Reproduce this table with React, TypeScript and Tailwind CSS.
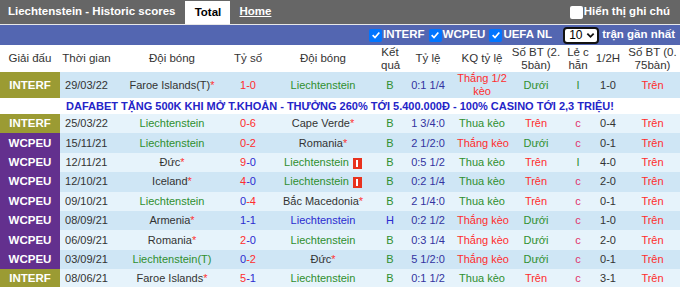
import React from "react"

type Row = {
  league: "INTERF" | "WCPEU"
  date: string
  home: string
  homeStar?: boolean
  homeGreen?: boolean
  score: [string, string]
  scoreColors: [string, string]
  away: string
  awayStar?: boolean
  awayColor?: string
  redCard?: boolean
  result: "B" | "H"
  odds: string
  oddsResult: string
  ou: "Dưới" | "Trên"
  oe: "I" | "c"
  half: string
  ou2: string
}

const RED = "text-[#ff2d2d]"
const BLUE = "text-[#2b2bd0]"
const GREEN = "text-[#2f8f2f]"

const rows: Row[] = [
  { league: "INTERF", date: "29/03/22", home: "Faroe Islands(T)", homeStar: true, score: ["1", "0"], scoreColors: [RED, RED], away: "Liechtenstein", awayColor: GREEN, result: "B", odds: "0:1 1/4", oddsResult: "Thắng 1/2 kèo", ou: "Dưới", oe: "I", half: "1-0", ou2: "Trên" },
  { league: "INTERF", date: "25/03/22", home: "Liechtenstein", homeGreen: true, score: ["0", "6"], scoreColors: [RED, RED], away: "Cape Verde", awayStar: true, result: "B", odds: "1 3/4:0", oddsResult: "Thua kèo", ou: "Trên", oe: "c", half: "0-4", ou2: "Trên" },
  { league: "WCPEU", date: "15/11/21", home: "Liechtenstein", homeGreen: true, score: ["0", "2"], scoreColors: [RED, RED], away: "Romania", awayStar: true, result: "B", odds: "2 1/2:0", oddsResult: "Thắng kèo", ou: "Dưới", oe: "c", half: "0-1", ou2: "Trên" },
  { league: "WCPEU", date: "12/11/21", home: "Đức", homeStar: true, score: ["9", "0"], scoreColors: [RED, BLUE], away: "Liechtenstein", awayColor: GREEN, redCard: true, result: "B", odds: "0:5 1/2", oddsResult: "Thua kèo", ou: "Trên", oe: "I", half: "4-0", ou2: "Trên" },
  { league: "WCPEU", date: "12/10/21", home: "Iceland", homeStar: true, score: ["4", "0"], scoreColors: [RED, BLUE], away: "Liechtenstein", awayColor: GREEN, redCard: true, result: "B", odds: "0:2 1/4", oddsResult: "Thua kèo", ou: "Trên", oe: "c", half: "2-0", ou2: "Trên" },
  { league: "WCPEU", date: "09/10/21", home: "Liechtenstein", homeGreen: true, score: ["0", "4"], scoreColors: [BLUE, RED], away: "Bắc Macedonia", awayStar: true, result: "B", odds: "2 1/4:0", oddsResult: "Thua kèo", ou: "Trên", oe: "c", half: "0-1", ou2: "Trên" },
  { league: "WCPEU", date: "08/09/21", home: "Armenia", homeStar: true, score: ["1", "1"], scoreColors: [BLUE, BLUE], away: "Liechtenstein", awayColor: BLUE, result: "H", odds: "0:2 1/2", oddsResult: "Thắng kèo", ou: "Dưới", oe: "c", half: "1-0", ou2: "Trên" },
  { league: "WCPEU", date: "06/09/21", home: "Romania", homeStar: true, score: ["2", "0"], scoreColors: [RED, BLUE], away: "Liechtenstein", awayColor: GREEN, result: "B", odds: "0:3 1/4", oddsResult: "Thắng kèo", ou: "Dưới", oe: "c", half: "2-0", ou2: "Trên" },
  { league: "WCPEU", date: "03/09/21", home: "Liechtenstein(T)", homeGreen: true, score: ["0", "2"], scoreColors: [BLUE, RED], away: "Đức", awayStar: true, result: "B", odds: "5 1/2:0", oddsResult: "Thắng kèo", ou: "Dưới", oe: "c", half: "0-1", ou2: "Trên" },
  { league: "INTERF", date: "08/06/21", home: "Faroe Islands", homeStar: true, score: ["5", "1"], scoreColors: [RED, BLUE], away: "Liechtenstein", awayColor: GREEN, result: "B", odds: "0:1 1/2", oddsResult: "Thua kèo", ou: "Trên", oe: "c", half: "3-1", ou2: "Trên" },
]

function Star() {
  return <span className="text-[#ff3333]">*</span>
}

function RedCard() {
  return (
    <span className="ml-1 inline-flex h-[11px] w-[9px] items-center justify-center bg-[#e8321e] align-[-1px]">
      <span className="h-[7px] w-[2px] bg-white" />
    </span>
  )
}

function Check({ checked }: { checked: boolean }) {
  return checked ? (
    <span className="inline-flex h-[13px] w-[13px] shrink-0 items-center justify-center rounded-[2px] bg-[#0075ff]">
      <svg viewBox="0 0 12 12" className="h-[10px] w-[10px]">
        <path d="M2 6.2 L4.8 9 L10 3" fill="none" stroke="white" strokeWidth="2" />
      </svg>
    </span>
  ) : (
    <span className="inline-block h-[13px] w-[13px] shrink-0 rounded-[2px] bg-white" />
  )
}

export default function App() {
  return (
    <div className="w-[680px] h-[287px] overflow-hidden bg-white font-['Liberation_Sans',Arial,sans-serif] text-[11px]">
      <div className="flex h-[25px] items-end bg-[#666666] border-b border-[#e8e8e8]">
        <div className="flex h-full items-center pl-2 text-[11.5px] font-bold text-white">Liechtenstein - Historic scores</div>
        <div className="ml-[10px] flex h-[23px] w-[45px] items-center justify-center bg-white text-[11.5px] font-bold text-black">Total</div>
        <div className="ml-[9px] flex h-full items-center text-[11.5px] font-bold text-white underline">Home</div>
        <div className="ml-auto mr-[10px] flex h-full items-center gap-[1px] text-[11.5px] font-bold text-white">
          <Check checked={false} />
          <span>Hiển thị ghi chú</span>
        </div>
      </div>
      <div className="flex h-[20px] items-center justify-end gap-[1px] bg-[#5366b1] pr-[5px] text-[11.5px] font-bold text-white">
        <Check checked />
        <span className="mr-[3px]">INTERF</span>
        <Check checked />
        <span className="mr-[3px]">WCPEU</span>
        <Check checked />
        <span>UEFA NL</span>
        <div className="ml-[10px] flex h-[17px] w-[36px] items-center justify-between rounded-[4px] border-2 border-[#111] bg-white pl-[4px] pr-[2px] text-[12px] font-normal text-black">
          <span>10</span>
          <svg viewBox="0 0 10 10" className="h-[9px] w-[9px]">
            <path d="M1.5 3 L5 6.5 L8.5 3" fill="none" stroke="#111" strokeWidth="2" />
          </svg>
        </div>
        <span className="ml-[2px]">trận gần nhất</span>
      </div>
      <table className="w-[680px] table-fixed border-collapse text-center leading-[13px]">
        <colgroup>
          <col className="w-[60px]" />
          <col className="w-[53px]" />
          <col className="w-[118px]" />
          <col className="w-[34px]" />
          <col className="w-[116px]" />
          <col className="w-[18px]" />
          <col className="w-[58px]" />
          <col className="w-[50px]" />
          <col className="w-[58px]" />
          <col className="w-[26px]" />
          <col className="w-[34px]" />
          <col className="w-[55px]" />
        </colgroup>
        <thead>
          <tr className="h-[27px] text-[#333] text-[11.5px]">
            <th className="font-normal">Giải đấu</th>
            <th className="font-normal">Thời gian</th>
            <th className="font-normal">Đội bóng</th>
            <th className="font-normal">Tỷ số</th>
            <th className="font-normal">Đội bóng</th>
            <th className="font-normal">Kết quả</th>
            <th className="font-normal">Tỷ lệ</th>
            <th className="font-normal">KQ tỷ lệ</th>
            <th className="font-normal">Số BT (2. 5bàn)</th>
            <th className="font-normal">Lẻ c hẵn</th>
            <th className="font-normal">1/2H</th>
            <th className="font-normal">Số BT (0. 75bàn)</th>
          </tr>
        </thead>
        <tbody className="whitespace-nowrap">
          {rows.map((r, i) => {
            const tall = i === 0
            const light = i % 2 === 1
            const tr = (
              <tr key={r.date} className={`${tall ? "h-[25px]" : "h-[19.4px]"} ${light ? "bg-[#e6f3fb]" : "bg-[#cfe6f5]"}`}>
                <td className={`font-bold text-white text-[11.5px] ${r.league === "INTERF" ? "bg-[#9b9b33]" : "bg-[#63308e]"}`}>{r.league}</td>
                <td className="text-[#333]">{r.date}</td>
                <td className={r.homeGreen ? GREEN : "text-[#333]"}>
                  {r.home}
                  {r.homeStar && <Star />}
                </td>
                <td>
                  <span className={r.scoreColors[0]}>{r.score[0]}</span>
                  <span className={r.scoreColors[1]}>-{r.score[1]}</span>
                </td>
                <td className={r.awayColor ?? "text-[#333]"}>
                  {r.away}
                  {r.awayStar && <Star />}
                  {r.redCard && <RedCard />}
                </td>
                <td className={r.result === "H" ? BLUE : GREEN}>{r.result}</td>
                <td className="text-[#3333a0]">{r.odds}</td>
                <td className={`overflow-visible ${r.oddsResult.startsWith("Thắng") ? RED : GREEN}`}>
                  {tall ? (
                    <>
                      Thắng 1/2
                      <br />
                      kèo
                    </>
                  ) : (
                    r.oddsResult
                  )}
                </td>
                <td className={r.ou === "Dưới" ? GREEN : RED}>{r.ou}</td>
                <td className={r.oe === "I" ? GREEN : "text-[#e0306a]"}>{r.oe}</td>
                <td className="text-[#333]">{r.half}</td>
                <td className={RED}>{r.ou2}</td>
              </tr>
            )
            if (i === 0) {
              return (
                <React.Fragment key={r.date}>
                  {tr}
                  <tr className="h-[16px] bg-white">
                    <td colSpan={12} className="text-[11px] font-bold text-[#2424c8]">
                      DAFABET TẶNG 500K KHI MỞ T.KHOẢN - THƯỞNG 260% TỚI 5.400.000Đ - 100% CASINO TỚI 2,3 TRIỆU!
                    </td>
                  </tr>
                </React.Fragment>
              )
            }
            return tr
          })}
        </tbody>
      </table>
    </div>
  )
}
